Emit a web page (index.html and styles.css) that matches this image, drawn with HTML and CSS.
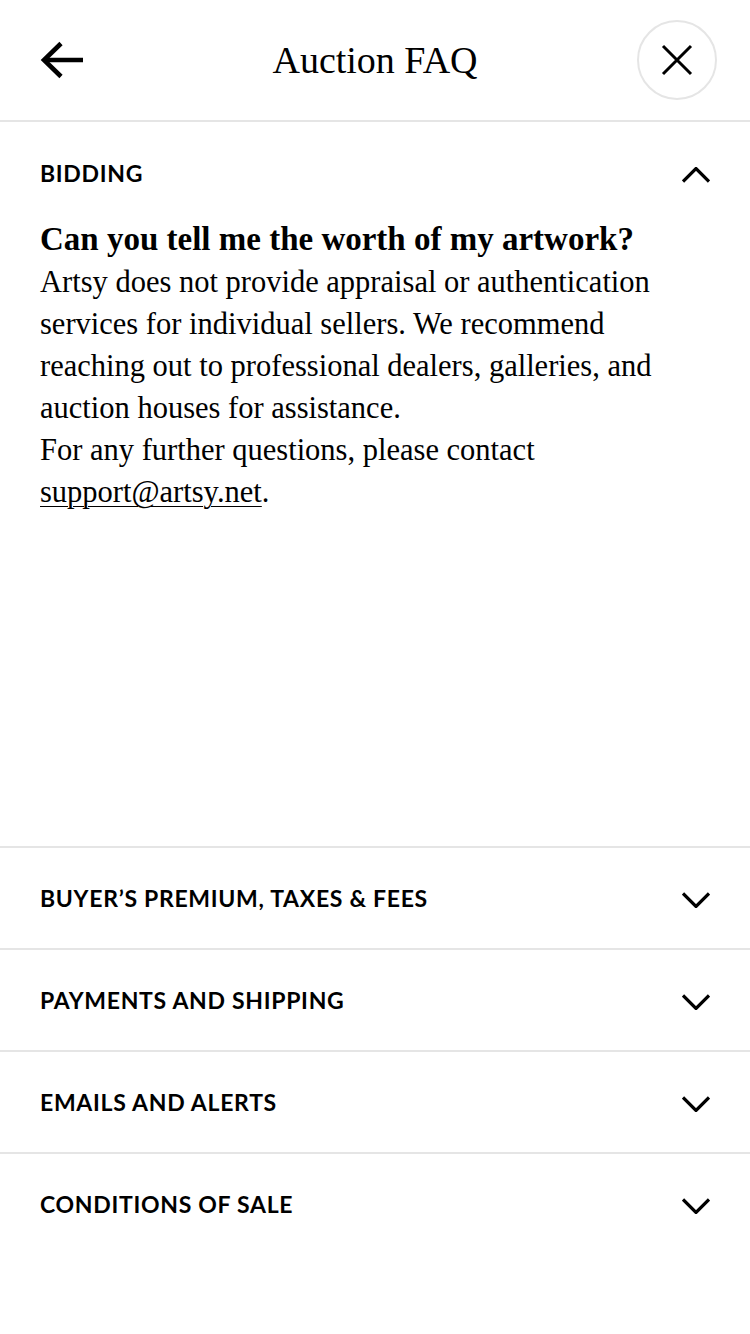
FILE: index.html
```html
<!DOCTYPE html>
<html lang="en">
<head>
<meta charset="utf-8">
<title>Auction FAQ</title>
<link rel="stylesheet" href="styles.css">
</head>
<body>
<div class="screen">
  <header class="topbar">
    <button class="back" aria-label="Back">
      <svg width="44" height="38" viewBox="0 0 44 38" fill="none" stroke="#000" stroke-width="4.6">
        <path d="M21 2.5 L4 19 L21 35.5" stroke-linejoin="miter"/>
        <path d="M4 19 H43"/>
      </svg>
    </button>
    <h1 class="title">Auction FAQ</h1>
    <button class="close" aria-label="Close">
      <svg width="32" height="32" viewBox="0 0 32 32" fill="none" stroke="#000" stroke-width="3">
        <path d="M2 2 L30 30 M30 2 L2 30"/>
      </svg>
    </button>
  </header>

  <section class="faq-open">
    <div class="faq-head">
      <span class="faq-label">Bidding</span>
      <svg class="chev" width="28" height="16" viewBox="0 0 28 16" fill="none" stroke="#000" stroke-width="3.2">
        <path d="M1 14.5 L14 1.5 L27 14.5"/>
      </svg>
    </div>
    <div class="faq-body">
      <h2 class="question">Can you tell me the worth of my artwork?</h2>
      <p class="answer">Artsy does not provide appraisal or authentication services for individual sellers. We recommend reaching out to professional dealers, galleries, and auction houses for assistance.</p>
      <p class="answer">For any further questions, please contact <a class="mail" href="#">support@artsy.net</a>.</p>
    </div>
  </section>

  <section class="faq-row">
    <span class="faq-label">Buyer’s Premium, Taxes &amp; Fees</span>
    <svg class="chev down" width="28" height="16" viewBox="0 0 28 16" fill="none" stroke="#000" stroke-width="3.2">
      <path d="M1 1.5 L14 14.5 L27 1.5"/>
    </svg>
  </section>
  <section class="faq-row">
    <span class="faq-label">Payments and Shipping</span>
    <svg class="chev down" width="28" height="16" viewBox="0 0 28 16" fill="none" stroke="#000" stroke-width="3.2">
      <path d="M1 1.5 L14 14.5 L27 1.5"/>
    </svg>
  </section>
  <section class="faq-row">
    <span class="faq-label">Emails and Alerts</span>
    <svg class="chev down" width="28" height="16" viewBox="0 0 28 16" fill="none" stroke="#000" stroke-width="3.2">
      <path d="M1 1.5 L14 14.5 L27 1.5"/>
    </svg>
  </section>
  <section class="faq-row">
    <span class="faq-label">Conditions of Sale</span>
    <svg class="chev down" width="28" height="16" viewBox="0 0 28 16" fill="none" stroke="#000" stroke-width="3.2">
      <path d="M1 1.5 L14 14.5 L27 1.5"/>
    </svg>
  </section>
</div>
</body>
</html>
```

FILE: styles.css
```css
* { box-sizing: border-box; }
html, body { margin: 0; padding: 0; background: #fff; }
body { width: 750px; min-height: 1334px; color: #000; }

.screen { display: flex; flex-direction: column; }

button { background: none; border: 0; padding: 0; margin: 0; cursor: pointer; }

.topbar {
  height: 122px;
  border-bottom: 2px solid #e5e5e5;
  display: flex;
  align-items: center;
  justify-content: space-between;
  padding: 0 33px 0 40px;
  position: relative;
}
.back { width: 78px; height: 78px; display: flex; align-items: center; justify-content: flex-start; }
.title {
  margin: 0;
  font-family: "Liberation Serif", "Times New Roman", serif;
  font-weight: 400;
  font-size: 38px;
  line-height: 1;
  position: absolute;
  left: 0; right: 0;
  top: 41px;
  text-align: center;
  pointer-events: none;
}
.close {
  width: 80px; height: 80px;
  border: 2px solid #e5e5e5;
  border-radius: 50%;
  display: flex; align-items: center; justify-content: center;
}

.faq-label {
  font-family: "Lato", "Liberation Sans", sans-serif;
  font-weight: 700;
  font-size: 23px;
  letter-spacing: 0.7px;
  text-transform: uppercase;
  line-height: 24px;
}
.chev { display: block; }
.chev.down { margin-top: 4px; }

.faq-open {
  height: 724px;
  display: flex;
  flex-direction: column;
}
.faq-head {
  display: flex;
  justify-content: space-between;
  align-items: flex-start;
  padding: 39px 40px 0 40px;
  height: 95px;
}
.faq-head .chev { margin-top: 6px; }

.faq-body { padding: 0 40px; }
.question {
  margin: 0;
  font-family: "Liberation Serif", "Times New Roman", serif;
  font-weight: 700;
  font-size: 33px;
  line-height: 44px;
}
.answer {
  margin: 0;
  font-family: "Liberation Serif", "Times New Roman", serif;
  font-size: 30.5px;
  line-height: 42px;
}
.mail { color: #000; text-decoration: underline; text-underline-offset: 4px; text-decoration-thickness: 1px; }

.faq-row {
  height: 102px;
  border-top: 2px solid #e5e5e5;
  display: flex;
  align-items: center;
  justify-content: space-between;
  padding: 0 40px;
}
```
